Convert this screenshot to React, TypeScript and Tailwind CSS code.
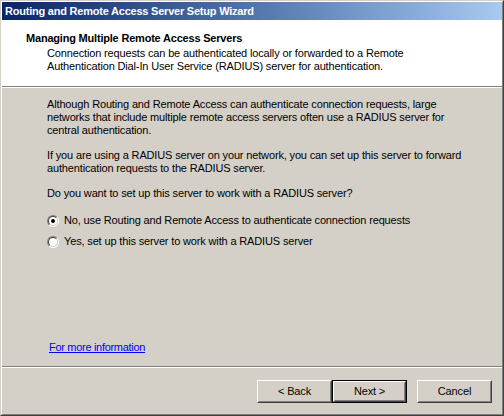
import React from "react";

const font = { fontFamily: '"Liberation Sans", Arial, sans-serif' };

function Radio({ checked }: { checked?: boolean }) {
  return (
    <div className="w-[12px] h-[12px] rounded-full border border-t-[#808080] border-l-[#808080] border-r-white border-b-white shrink-0">
      <div className="w-full h-full rounded-full border border-t-[#404040] border-l-[#404040] border-r-[#d4d0c8] border-b-[#d4d0c8] bg-white flex items-center justify-center">
        {checked && <div className="w-[4px] h-[4px] rounded-full bg-black" />}
      </div>
    </div>
  );
}

function Button({ label, isDefault }: { label: string; isDefault?: boolean }) {
  const inner = (
    <div className="w-full h-full border border-t-white border-l-white border-r-[#404040] border-b-[#404040]">
      <div className="w-full h-full border border-t-[#d4d0c8] border-l-[#d4d0c8] border-r-[#808080] border-b-[#808080] flex items-center justify-center text-[11px] text-black">
        {label}
      </div>
    </div>
  );
  return (
    <div className={`w-[75px] h-[23px] ${isDefault ? "border border-black" : ""}`}>{inner}</div>
  );
}

export default function App() {
  return (
    <div
      className="w-[504px] h-[416px] bg-[#d4d0c8] border border-t-[#d4d0c8] border-l-[#d4d0c8] border-r-[#404040] border-b-[#404040] tracking-[-0.15px]"
      style={font}
    >
      <div className="w-full h-full border border-t-white border-l-white border-r-[#808080] border-b-[#808080] flex flex-col">
        {/* Title bar */}
        <div className="h-[18px] shrink-0 bg-gradient-to-r from-[#0a246a] to-[#a6caf0] flex items-center pl-[3px]">
          <span className="text-white font-bold text-[11px] leading-[13px] tracking-[-0.22px]">
            Routing and Remote Access Server Setup Wizard
          </span>
        </div>
        {/* Header */}
        <div className="h-[66px] shrink-0 bg-white pt-[12px] pl-[24px] text-[11px] leading-[13px] text-black">
          <div className="font-bold tracking-[-0.2px]">Managing Multiple Remote Access Servers</div>
          <div className="pl-[21px] pt-[2px]">
            Connection requests can be authenticated locally or forwarded to a Remote
            <br />
            Authentication Dial-In User Service (RADIUS) server for authentication.
          </div>
        </div>
        <div className="h-[1px] bg-[#808080] shrink-0" />
        <div className="h-[1px] bg-white shrink-0" />
        {/* Body */}
        <div className="h-[278px] shrink-0 pl-[45px] pt-[10px] text-[11px] leading-[13px] text-black flex flex-col">
          <p>
            Although Routing and Remote Access can authenticate connection requests, large
            <br />
            networks that include multiple remote access servers often use a RADIUS server for
            <br />
            central authentication.
          </p>
          <p className="mt-[12px]">
            If you are using a RADIUS server on your network, you can set up this server to forward
            <br />
            authentication requests to the RADIUS server.
          </p>
          <p className="mt-[12px]">Do you want to set up this server to work with a RADIUS server?</p>
          <div className="mt-[14px] flex items-center gap-[5px]">
            <Radio checked />
            <span>No, use Routing and Remote Access to authenticate connection requests</span>
          </div>
          <div className="mt-[8px] flex items-center gap-[5px]">
            <Radio />
            <span>Yes, set up this server to work with a RADIUS server</span>
          </div>
          <div className="mt-auto mb-[12px] pl-[2px]">
            <a className="text-[#0000ff] underline cursor-pointer tracking-[-0.3px]">For more information</a>
          </div>
        </div>
        <div className="h-[1px] bg-[#808080] shrink-0" />
        <div className="h-[1px] bg-white shrink-0" />
        {/* Buttons */}
        <div className="flex-1 flex items-start justify-end pt-[12px] pr-[10px]">
          <Button label="< Back" />
          <Button label="Next >" isDefault />
          <div className="w-[10px]" />
          <Button label="Cancel" />
        </div>
      </div>
    </div>
  );
}
